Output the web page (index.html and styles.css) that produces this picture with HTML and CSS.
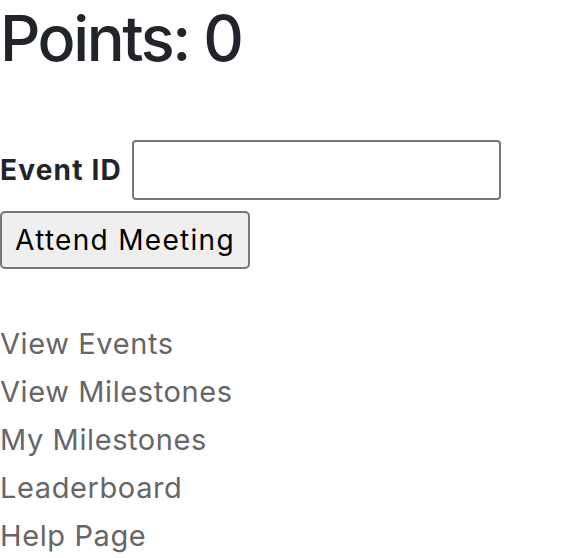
FILE: index.html
```html
<!DOCTYPE html>
<html lang="en">
<head>
<meta charset="utf-8">
<title>Points</title>
<link rel="stylesheet" href="styles.css">
</head>
<body>
<main class="page">
  <h1 class="title">Points: 0</h1>
  <form class="attend">
    <div class="field">
      <label class="label" for="event-id">Event ID</label>
      <input class="input" id="event-id" type="text">
    </div>
    <button class="btn" type="button">Attend Meeting</button>
  </form>
  <nav class="links">
    <a class="link" href="#">View Events</a>
    <a class="link" href="#">View Milestones</a>
    <a class="link" href="#">My Milestones</a>
    <a class="link" href="#">Leaderboard</a>
    <a class="link" href="#">Help Page</a>
  </nav>
</main>
</body>
</html>
```

FILE: styles.css
```css
html, body {
  margin: 0;
  padding: 0;
  background: #ffffff;
}

.page {
  font-family: Inter, "Liberation Sans", Arial, sans-serif;
  color: #212529;
  display: flex;
  flex-direction: column;
}

.title {
  margin: 0;
  font-size: 63px;
  font-weight: 500;
  letter-spacing: -2.4px;
  line-height: 76px;
  color: #212529;
}

.attend {
  margin-top: 64px;
  display: flex;
  flex-direction: column;
  align-items: flex-start;
  gap: 11px;
}

.field {
  display: flex;
  align-items: center;
  gap: 10px;
}

.label {
  font-size: 28px;
  font-weight: 700;
  letter-spacing: 1.2px;
}

.input {
  box-sizing: border-box;
  width: 369px;
  height: 60px;
  border: 2px solid #767676;
  border-radius: 4px;
  background: #fff;
  font-size: 28px;
  padding: 0 8px;
  margin: 0;
}

.btn {
  box-sizing: border-box;
  width: 250px;
  height: 58px;
  margin: 0;
  border: 2px solid #767676;
  border-radius: 5px;
  background: #efefef;
  font-family: Inter, "Liberation Sans", Arial, sans-serif;
  font-size: 28px;
  letter-spacing: 1.3px;
  color: #000;
  padding: 0 8px;
}

.links {
  margin-top: 51px;
  display: flex;
  flex-direction: column;
}

.link {
  font-size: 29px;
  line-height: 48px;
  letter-spacing: 0.6px;
  color: #666666;
  text-decoration: none;
}
```
